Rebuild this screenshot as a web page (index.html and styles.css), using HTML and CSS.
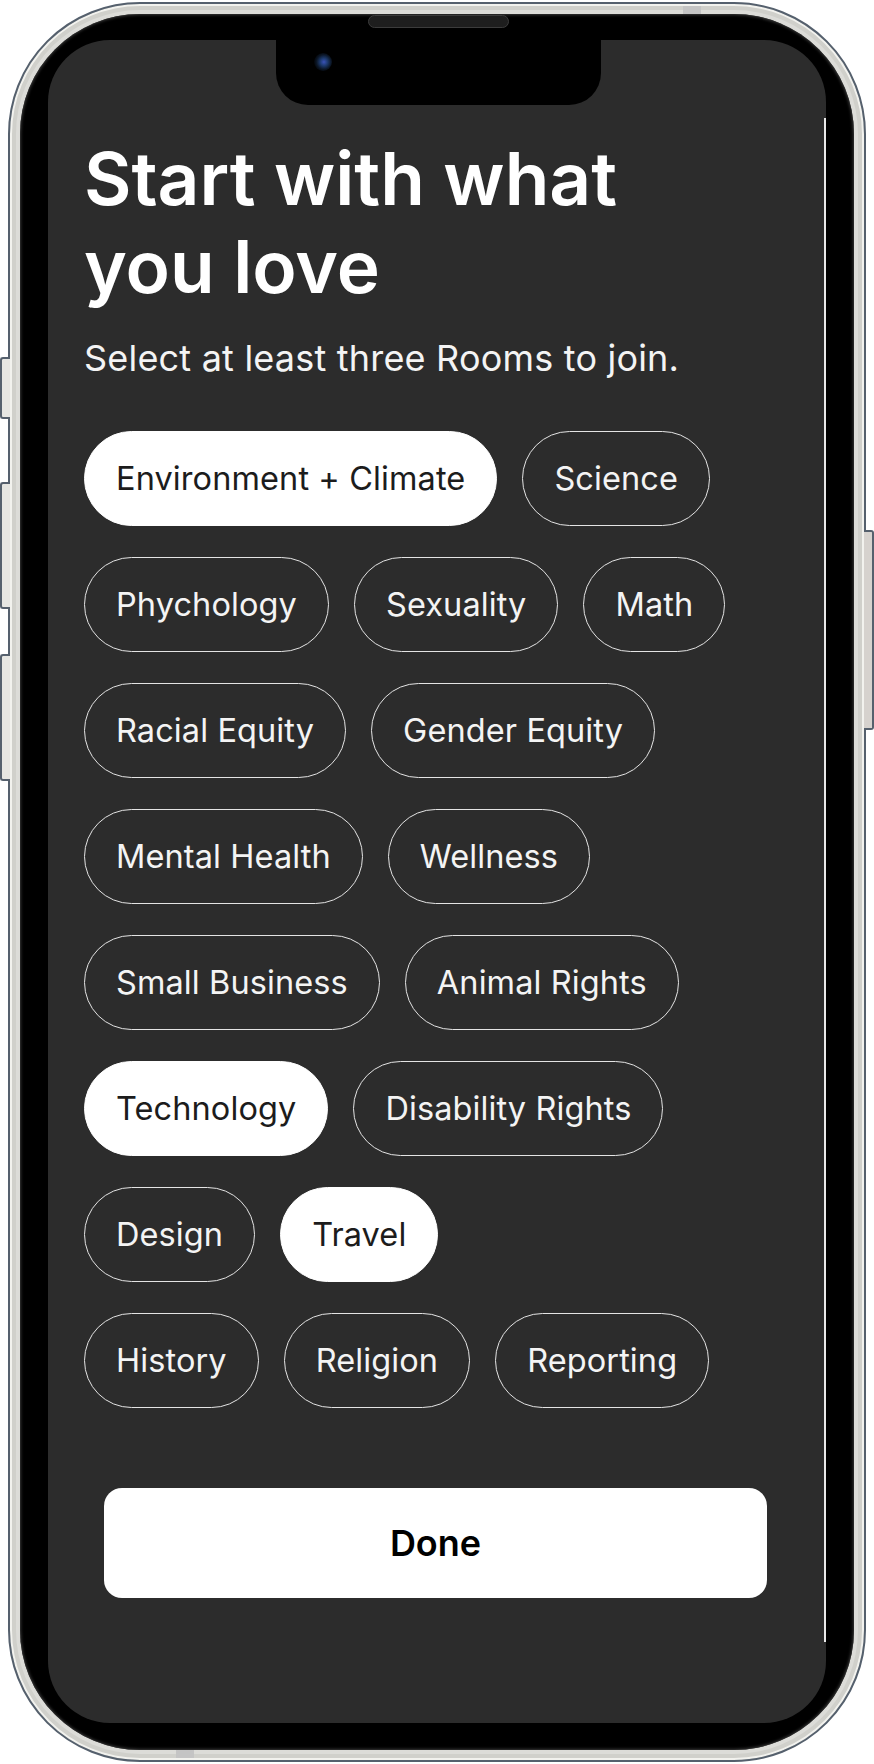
FILE: index.html
```html
<!DOCTYPE html>
<html lang="en">
<head>
<meta charset="utf-8">
<title>Start with what you love</title>
<link rel="stylesheet" href="styles.css">
</head>
<body>
<div class="phone">
  <span class="btn btn-l1"></span>
  <span class="btn btn-l2"></span>
  <span class="btn btn-l3"></span>
  <span class="btn btn-r1"></span>
  <span class="speaker"></span>
  <span class="band band-top"></span>
  <span class="band band-bottom"></span>
  <div class="bezel">
    <div class="screen">
      <div class="notch"><span class="camera"></span></div>
      <span class="edge-line"></span>
      <main class="content">
        <h1 class="title">Start with what<br>you love</h1>
        <p class="subtitle">Select at least three Rooms to join.</p>
        <div class="chips">
          <div class="chip-row">
            <span class="chip selected">Environment + Climate</span>
            <span class="chip">Science</span>
          </div>
          <div class="chip-row">
            <span class="chip">Phychology</span>
            <span class="chip">Sexuality</span>
            <span class="chip">Math</span>
          </div>
          <div class="chip-row">
            <span class="chip">Racial Equity</span>
            <span class="chip">Gender Equity</span>
          </div>
          <div class="chip-row">
            <span class="chip">Mental Health</span>
            <span class="chip">Wellness</span>
          </div>
          <div class="chip-row">
            <span class="chip">Small Business</span>
            <span class="chip">Animal Rights</span>
          </div>
          <div class="chip-row">
            <span class="chip selected">Technology</span>
            <span class="chip">Disability Rights</span>
          </div>
          <div class="chip-row">
            <span class="chip">Design</span>
            <span class="chip selected">Travel</span>
          </div>
          <div class="chip-row">
            <span class="chip">History</span>
            <span class="chip">Religion</span>
            <span class="chip">Reporting</span>
          </div>
        </div>
        <button class="done">Done</button>
      </main>
    </div>
  </div>
</div>
</body>
</html>
```

FILE: styles.css
```css
* { box-sizing: border-box; }

html, body {
  margin: 0;
  padding: 0;
  background: #ffffff;
}

body {
  width: 874px;
  height: 1764px;
  padding: 2px 0 0 8px;
  font-family: Inter, "Noto Sans", "Liberation Sans", sans-serif;
  overflow: hidden;
}

.phone {
  position: relative;
  width: 858px;
  height: 1760px;
  border-radius: 132px;
  border: 2px solid #55606d;
  background: #dcdcd8;
  padding: 10px;
  box-shadow: inset 0 0 0 2px #f2f2ee, inset 0 0 0 6px #d0d0cb;
}

.btn {
  position: absolute;
  width: 10px;
  border: 2px solid #55606d;
  background: #e6e6e2;
}
.btn-l1 { left: -10px; top: 353px; height: 62px; border-right: none; border-radius: 3px 0 0 3px; }
.btn-l2 { left: -10px; top: 478px; height: 127px; border-right: none; border-radius: 3px 0 0 3px; }
.btn-l3 { left: -10px; top: 650px; height: 127px; border-right: none; border-radius: 3px 0 0 3px; }
.btn-r1 { right: -10px; top: 526px; height: 200px; border-left: none; border-radius: 0 3px 3px 0; background: #d6d2ce; }

.speaker {
  position: absolute;
  left: 358px;
  top: 11px;
  width: 141px;
  height: 13px;
  border-radius: 7px;
  background: #1e1e1e;
  border: 1px solid #3c3c3c;
  z-index: 2;
}

.band {
  position: absolute;
  background: #c4c4c4;
  width: 18px;
  height: 8px;
}
.band-top { left: 673px; top: 2px; }
.band-bottom { left: 166px; bottom: 2px; }

.bezel {
  height: 100%;
  border-radius: 120px;
  background: #000000;
  padding: 26px 28px 27px 28px;
  box-shadow: inset 0 0 3px 1px #3a3a3a;
}

.screen {
  position: relative;
  height: 100%;
  border-radius: 62px;
  background: #2c2c2c;
  overflow: hidden;
}

.notch {
  position: absolute;
  left: 228px;
  top: 0;
  width: 325px;
  height: 65px;
  background: #000000;
  border-radius: 0 0 32px 32px;
}

.camera {
  position: absolute;
  left: 38px;
  top: 13px;
  width: 18px;
  height: 18px;
  border-radius: 50%;
  background: radial-gradient(circle at 55% 50%, #3a52b8 0, #1d3a6e 28%, #0b1626 55%, #000000 80%);
}

.edge-line {
  position: absolute;
  right: 0;
  top: 78px;
  width: 2px;
  height: 1524px;
  background: #e9e9e9;
}

.content {
  padding: 95px 36px 0 36px;
}

.title {
  margin: 0;
  font-size: 73px;
  line-height: 88px;
  font-weight: 600;
  color: #ffffff;
}

.subtitle {
  margin: 27px 0 0 0;
  font-size: 36px;
  line-height: 40px;
  font-weight: 400;
  letter-spacing: 0.2px;
  color: #f4f4f4;
}

.chips {
  margin-top: 53px;
  display: flex;
  flex-direction: column;
  row-gap: 31px;
}

.chip-row {
  display: flex;
  column-gap: 25px;
}

.chip {
  display: inline-flex;
  align-items: center;
  height: 95px;
  padding: 0 31px;
  border: 1.5px solid #e4e4e4;
  border-radius: 48px;
  font-size: 32.5px;
  font-weight: 400;
  letter-spacing: 0.1px;
  color: #f4f4f4;
  white-space: nowrap;
}

.chip.selected {
  background: #ffffff;
  border-color: #ffffff;
  color: #1c1c1c;
}

.done {
  display: block;
  margin: 80px 0 0 20px;
  width: 663px;
  height: 110px;
  border: none;
  border-radius: 18px;
  background: #ffffff;
  color: #000000;
  font-family: Inter, "Noto Sans", "Liberation Sans", sans-serif;
  font-size: 36px;
  font-weight: 600;
}
```
